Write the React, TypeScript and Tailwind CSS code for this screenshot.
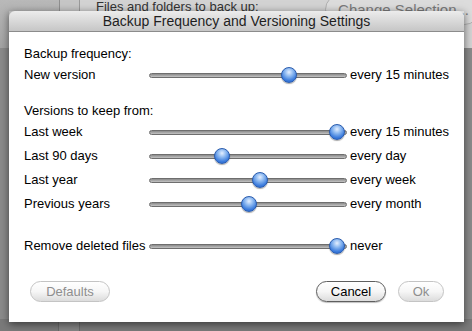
import React from "react";

type SliderRow = { label: string; pos: number; value: string };

const font = { fontFamily: '"Liberation Sans", Arial, sans-serif' };

function Slider({ pos }: { pos: number }) {
  return (
    <div className="relative h-[14px] w-[198px] shrink-0 flex items-center">
      <div className="h-[5px] w-full rounded-full border border-[#6e6e6e] bg-gradient-to-b from-[#8a8a8a] to-[#c4c4c4]" />
      {/* knob */}
      <div
        className="absolute top-[-1px] h-[16px] w-[16px] rounded-full border border-[#2a5cae] bg-[radial-gradient(circle_at_50%_30%,#e4efff_0%,#8ab7f0_35%,#3b7bdc_70%,#2a62c4_100%)] shadow-[0_1px_1px_rgba(0,0,0,0.35)]"
        style={{ left: pos - 8 }}
      />
    </div>
  );
}

function Row({ label, pos, value }: SliderRow) {
  return (
    <div className="flex h-[24px] items-center">
      <span className="w-[125px] shrink-0 whitespace-nowrap">{label}</span>
      <Slider pos={pos} />
      <span className="ml-[3px] whitespace-nowrap">{value}</span>
    </div>
  );
}

function MacButton({ children, disabled, w }: { children: React.ReactNode; disabled?: boolean; w: string }) {
  return (
    <button
      className={
        "h-[21px] rounded-full border bg-gradient-to-b from-white via-[#f6f6f6] to-[#dcdcdc] text-[13px] leading-none " +
        w +
        (disabled
          ? " border-[#c4c4c4] text-[#8e8e8e]"
          : " border-[#5e5e5e] text-black shadow-[0_1px_1px_rgba(0,0,0,0.25)]")
      }
    >
      {children}
    </button>
  );
}

const keep: SliderRow[] = [
  { label: "Last week", pos: 188, value: "every 15 minutes" },
  { label: "Last 90 days", pos: 73, value: "every day" },
  { label: "Last year", pos: 111, value: "every week" },
  { label: "Previous years", pos: 100, value: "every month" },
];

export default function App() {
  return (
    <div className="relative h-[331px] w-[472px] overflow-hidden bg-[#8b8b8b] text-[13px] text-black" style={font}>
      {/* window behind the sheet */}
      <div className="flex h-[48px] bg-gradient-to-b from-[#b9b9b9] to-[#a3a3a3]">
        <div className="w-[60px] border-r border-[#8f8f8f]" />
        <div className="w-[20px] border-r border-[#9a9a9a] bg-[#c6c6c6]" />
        <div className="flex flex-1 items-start justify-between bg-[#d3d3d3] pl-[16px]">
          <span className="-mt-[3px] text-[#333]">Files and folders to back up:</span>
          <span className="-mr-[8px] -mt-[6px] whitespace-nowrap rounded-full border border-[#b0b0b0] bg-[#dcdcdc] pl-[12px] pr-[10px] pb-[2px] pt-[4px] text-[15px] text-[#7a7a7a]">
            Change Selection...
          </span>
        </div>
      </div>
      <div className="absolute bottom-0 left-0 right-0 h-[12px] bg-[#7a7a7a]">
        <div className="ml-[58px] h-full w-[22px] border-x border-[#6a6a6a] bg-[#848484]" />
      </div>

      {/* sheet */}
      <div className="absolute left-[9px] top-[11px] w-[455px] shadow-[0_2px_8px_rgba(0,0,0,0.55)]">
        <div className="flex h-[21px] items-center justify-center rounded-t-[6px] border-b border-[#8c8c8c] bg-gradient-to-b from-[#ececec] to-[#c6c6c6] text-[14px] text-[#1e1e1e]">
          Backup Frequency and Versioning Settings
        </div>
        <div className="bg-white pl-[15px] pr-[15px] pt-[13px] pb-[21px]">
          <div className="flex h-[18px] items-center">Backup frequency:</div>
          <Row label="New version" pos={140} value="every 15 minutes" />

          <div className="mt-[15px] flex h-[18px] items-center">Versions to keep from:</div>
          {keep.map((r) => (
            <Row key={r.label} {...r} />
          ))}

          <div className="mt-[18px]">
            <Row label="Remove deleted files" pos={188} value="never" />
          </div>

          <div className="mt-[23px] flex h-[20px] items-center pl-[6px] pr-[5px]">
            <MacButton disabled w="w-[80px]">Defaults</MacButton>
            <div className="flex-1" />
            <MacButton w="w-[70px]">Cancel</MacButton>
            <div className="w-[12px]" />
            <MacButton disabled w="w-[46px]">Ok</MacButton>
          </div>
        </div>
      </div>
    </div>
  );
}
